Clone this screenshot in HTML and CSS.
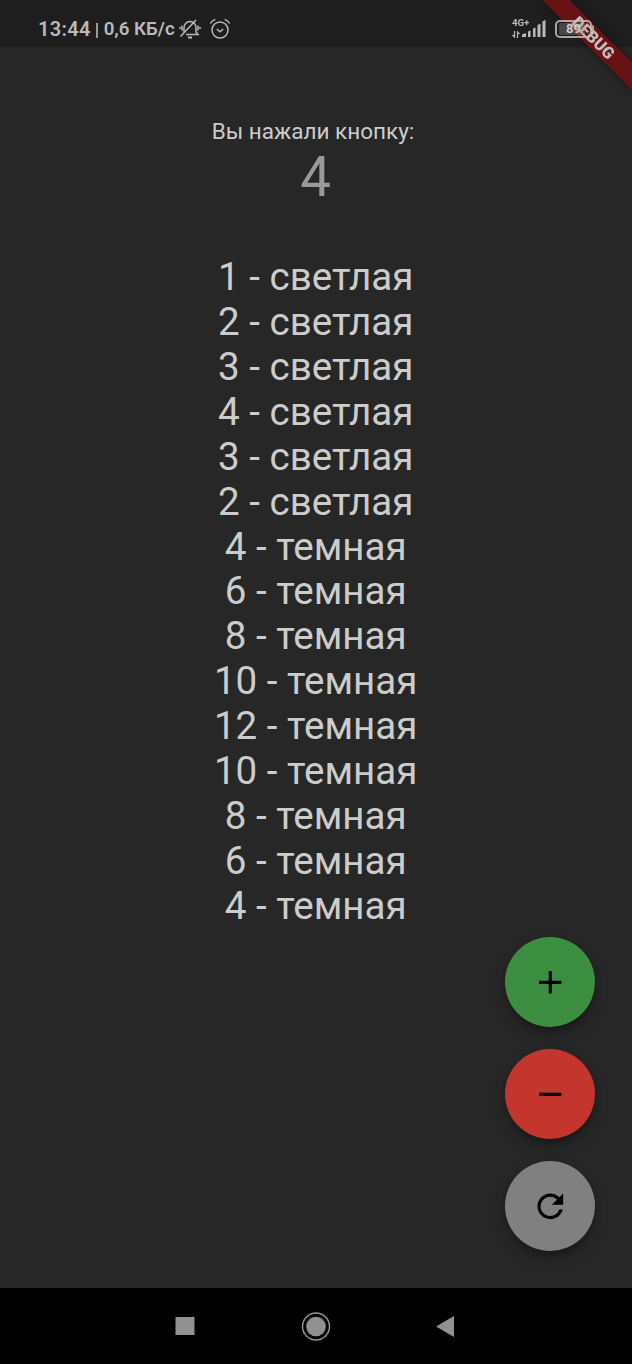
FILE: index.html
```
<!DOCTYPE html>
<html lang="ru">
<head>
<meta charset="utf-8">
<title>Счётчик</title>
<link rel="stylesheet" href="styles.css">
</head>
<body>
<div class="screen">
  <header class="status">
    <div class="status-left">
      <span class="clock">13:44</span><span class="divider"></span><span class="speed">0,6 КБ/с</span>
      <svg class="bell" width="22" height="22" viewBox="0 0 22 22" fill="none" stroke="currentColor" stroke-width="1.5">
        <path d="M5 15.500V10a6 6 0 0 1 6-6.500 6 6 0 0 1 6 6.500v4l2 2.500H7M1.500 18.500 17 2M3 7.500v5M1 9v2M19 7.500v5M21 9v2"/>
        <path d="M9 19.500h4" stroke-width="2"/>
      </svg>
      <svg class="alarm" width="22" height="22" viewBox="0 0 22 22" fill="none" stroke="currentColor" stroke-width="1.500">
        <circle cx="11" cy="12" r="8"/><path d="m7.800 11 3.200 2.800 3.200-2.800M1.300 5.500Q3 2.500 6.300 1.500M20.700 5.500Q19 2.500 15.700 1.500"/>
      </svg>
    </div>
    <div class="status-right">
      <div class="network">
        <span class="network-type">4G+</span>
        <svg width="8" height="7" viewBox="0 0 8 7" fill="none" stroke="currentColor" stroke-width="1.200"><path d="M2.500 0v6L.4 4M5.500 7V1l2.100 2"/></svg>
      </div>
      <svg class="signal" width="24" height="18" viewBox="0 0 24 18" fill="currentColor"><path d="M0 14.500 4 13v4H0zM6 11.500l2.500-1V17H6zM11 8.500l2.500-1V17H11zM15.500 5l3-1.200V17h-3zM20.500 1.200 23.500 0v17h-3z"/></svg>
      <div class="battery"><span>89</span></div>
      <span class="battery-cap"></span>
    </div>
  </header>
  <main class="content">
    <p class="caption">Вы нажали кнопку:</p>
    <p class="counter">4</p>
    <ul class="history">
      <li>1 - светлая</li>
      <li>2 - светлая</li>
      <li>3 - светлая</li>
      <li>4 - светлая</li>
      <li>3 - светлая</li>
      <li>2 - светлая</li>
      <li>4 - темная</li>
      <li>6 - темная</li>
      <li>8 - темная</li>
      <li>10 - темная</li>
      <li>12 - темная</li>
      <li>10 - темная</li>
      <li>8 - темная</li>
      <li>6 - темная</li>
      <li>4 - темная</li>
    </ul>
    <div class="actions">
      <button class="fab add" aria-label="Добавить"><svg viewBox="0 0 24 24"><path d="M19 13h-6v6h-2v-6H5v-2h6V5h2v6h6v2z"/></svg></button>
      <button class="fab remove" aria-label="Убавить"><svg viewBox="0 0 24 24"><path d="M19 13H5v-2h14v2z"/></svg></button>
      <button class="fab reset" aria-label="Сбросить"><svg viewBox="0 0 24 24"><path d="M17.650 6.350C16.200 4.900 14.210 4 12 4c-4.420 0-7.990 3.580-7.990 8s3.570 8 7.990 8c3.730 0 6.840-2.550 7.730-6h-2.080c-.82 2.330-3.040 4-5.650 4-3.310 0-6-2.690-6-6s2.690-6 6-6c1.660 0 3.140.69 4.220 1.780L13 11h7V4l-2.350 2.350z"/></svg></button>
    </div>
  </main>
  <nav class="navbar">
    <svg width="632" height="76" viewBox="0 0 632 76" fill="#919191">
      <rect x="175.500" y="29" width="19" height="18"/>
      <circle cx="316" cy="38.500" r="9.800"/>
      <circle cx="316" cy="38.500" r="13.500" fill="none" stroke="#919191" stroke-width="1.500"/>
      <path d="M436 38.500 454 28v21z"/>
    </svg>
  </nav>
  <svg class="debug-banner" width="112" height="112" viewBox="0 0 112 112">
    <path class="band" d="M22-0H49.500L112 62.500V90z"/>
    <text class="band-text" transform="translate(73.500 37.500) rotate(45)" text-anchor="middle" y="6">DEBUG</text>
  </svg>
</div>
</body>
</html>
```
FILE: styles.css
```
* { box-sizing: border-box; }
body {
  margin: 0;
  background: #272727;
  font-family: Roboto, "Noto Sans", sans-serif;
}
.screen {
  position: relative;
  display: flex;
  flex-direction: column;
  width: 632px;
  height: 1364px;
  overflow: hidden;
}
.status {
  display: flex;
  justify-content: space-between;
  height: 47px;
  padding: 12px 38px 0 38px;
  background: #1e1e1e;
  color: #b9b9b9;
}
.status-left, .status-right {
  display: flex;
  align-items: flex-start;
  height: 35px;
}
.status-left {
  font-weight: 600;
  white-space: nowrap;
}
.clock { font-size: 20px; line-height: 35px; letter-spacing: .3px; }
.divider { width: 1.5px; height: 15px; margin: 11px 6px 0 5.5px; background: #999; }
.speed { font-size: 18.7px; line-height: 35px; }
.bell { margin: 6px 0 0 4px; }
.alarm { margin: 6px 0 0 8px; }
/* System indicators stay above the debug ribbon. */
.status-right { position: relative; z-index: 2; }
.network {
  display: flex;
  flex-direction: column;
  width: 17px;
  padding-top: 6px;
}
.network svg { margin-top: 4px; }
.network-type { font-size: 9.5px; line-height: 9px; font-weight: 700; }
.signal { margin: 8px 9px 0 -7px; }
.battery {
  width: 37px;
  height: 18px;
  margin-top: 8px;
  border: 2px solid rgba(190, 190, 190, .85);
  border-radius: 5px;
  background: linear-gradient(90deg, rgba(150, 150, 150, .35) 88%, transparent 88%) content-box;
  padding: 1px 2px;
  text-align: center;
  font-size: 13px;
  line-height: 12px;
  font-weight: 700;
  color: #ccc;
}
.battery-cap {
  width: 2px;
  height: 8px;
  margin-top: 13px;
  border-radius: 0 2px 2px 0;
  background: rgba(190, 190, 190, .85);
}
.content {
  display: flex;
  flex-direction: column;
  align-items: center;
  height: 1241px;
  padding-top: 71px;
  color: #ccc;
}
.caption {
  margin: 0;
  padding-right: 6px;
  font-size: 22.5px;
  line-height: 27px;
}
.counter {
  margin: 0;
  padding-right: 1px;
  font-size: 54.6px;
  line-height: 64px;
  color: #999;
}
.history {
  margin: 46.3px 0 0;
  padding: 0 .6px 0 0;
  list-style: none;
  text-align: center;
  font-size: 38.57px;
  line-height: 44.88px;
}
.actions {
  display: flex;
  flex-direction: column;
  gap: 22.3px;
  align-self: flex-end;
  margin: 8.4px 37px 0 0;
}
.fab {
  display: grid;
  place-items: center;
  width: 90px;
  height: 90px;
  padding: 0;
  border: 0;
  border-radius: 50%;
  box-shadow: 0 5px 8px -2px rgba(0, 0, 0, .3), 0 8px 16px rgba(0, 0, 0, .16);
}
.fab svg { width: 38.6px; height: 38.6px; fill: #000; }
.add { background: #3c8f40; }
.remove { background: #c4362d; }
.reset { background: #808080; }
.navbar { height: 76px; background: #000; }
.navbar svg { display: block; }
.debug-banner {
  position: absolute;
  top: 0;
  right: 0;
  filter: drop-shadow(0 0 4px rgba(0, 0, 0, .5));
}
.band { fill: #6b1214; fill-opacity: .95; }
.band-text { font-size: 16.4px; font-weight: 900; fill: #c4bcbc; }
```
